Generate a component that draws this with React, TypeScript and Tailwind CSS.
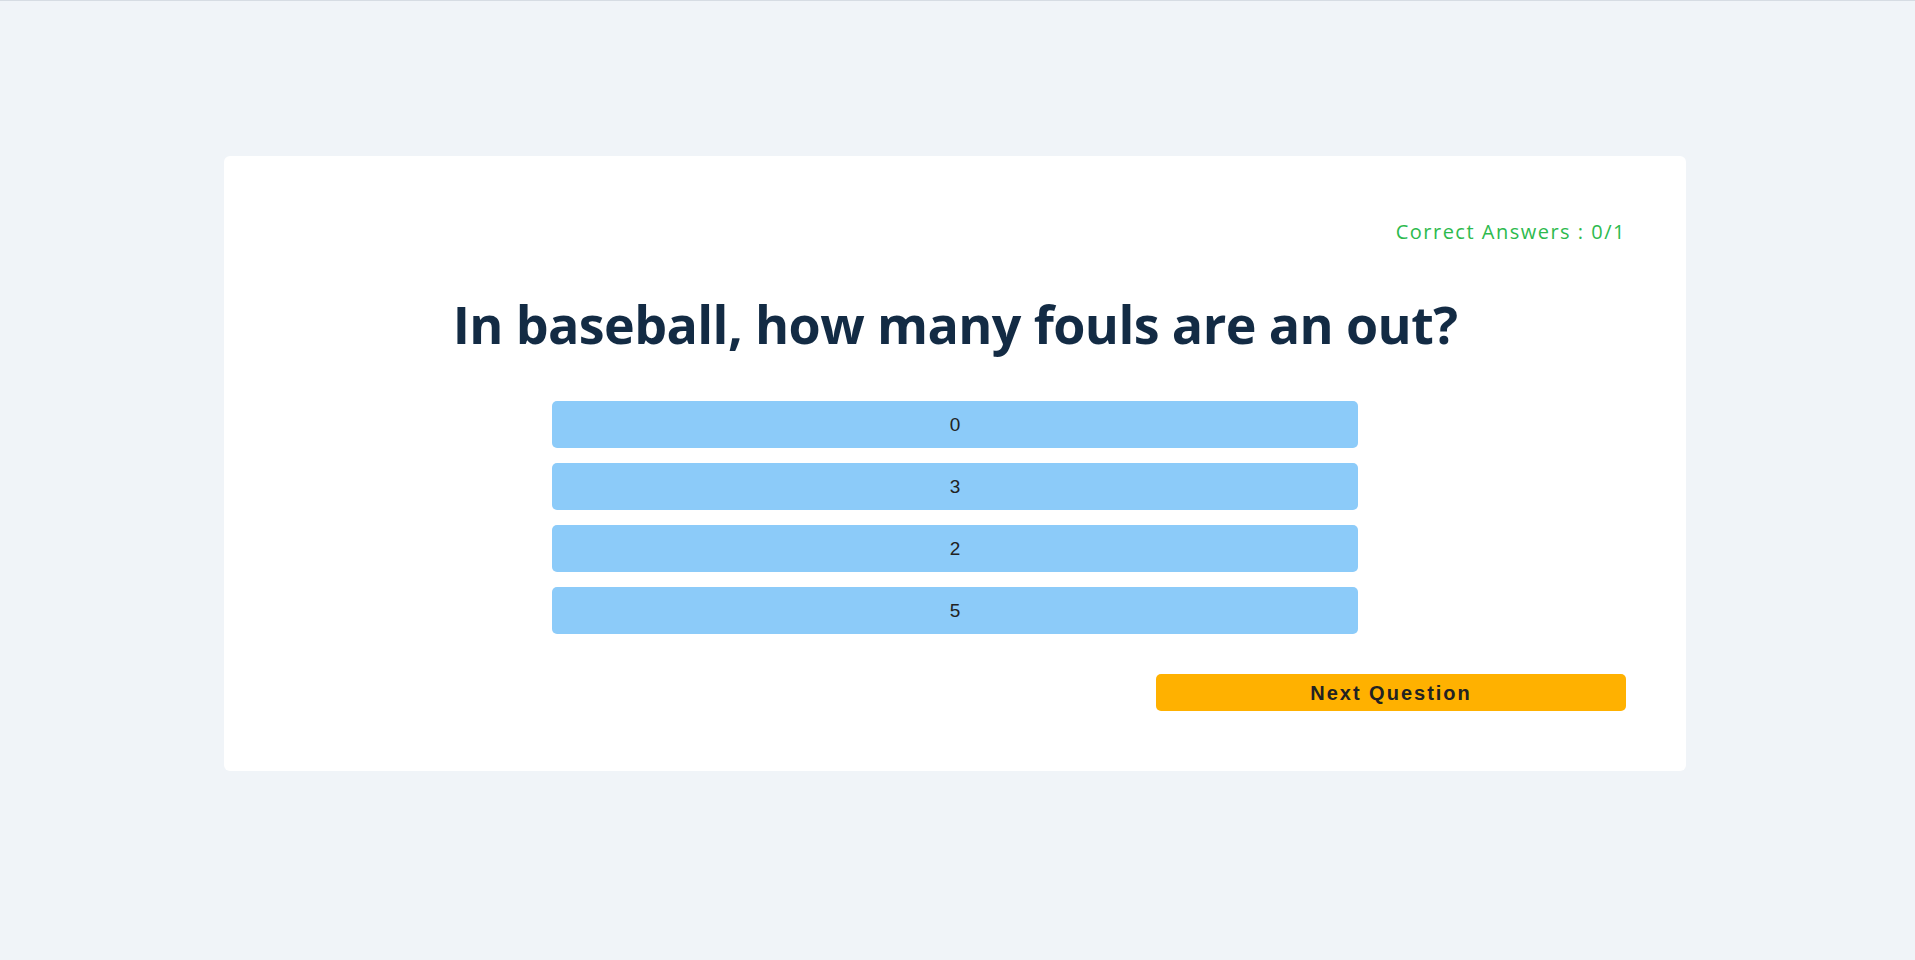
const answers = ['0', '3', '2', '5']

export default function App() {
  return (
    <div className="min-h-screen bg-[#f0f4f8] border-t border-[#d6dce3] pt-[155px]">
      <div className="ml-[224px] w-[1462px] bg-white rounded-md px-[60px] pt-[62px] pb-[60px]">
        {/* Score */}
        <p className="text-right text-[20px] leading-[28px] tracking-[1.5px] text-[#2dba4e] font-['Open_Sans',sans-serif]">
          Correct Answers : 0/1
        </p>

        {/* Question */}
        <h1 className="mt-[47px] text-center text-[52px] leading-[1.2] font-bold tracking-[-0.6px] text-[#132b44] font-['Open_Sans',sans-serif]">
          In baseball, how many fouls are an out?
        </h1>

        {/* Answers */}
        <div className="mt-[46px] w-[806px] mx-auto flex flex-col gap-[15px]">
          {answers.map((answer) => (
            <button
              key={answer}
              className="h-[47px] w-full rounded-[5px] bg-[#8ccbf9] text-[19px] text-[#222] font-['Liberation_Sans',Arial,sans-serif]"
            >
              {answer}
            </button>
          ))}
        </div>

        {/* Next */}
        <div className="mt-[40px] flex justify-end">
          <button className="h-[37px] w-[470px] rounded-[5px] bg-[#ffb100] text-[20px] font-bold tracking-[2px] text-[#222] font-['Liberation_Sans',Arial,sans-serif]">
            Next Question
          </button>
        </div>
      </div>
    </div>
  )
}
